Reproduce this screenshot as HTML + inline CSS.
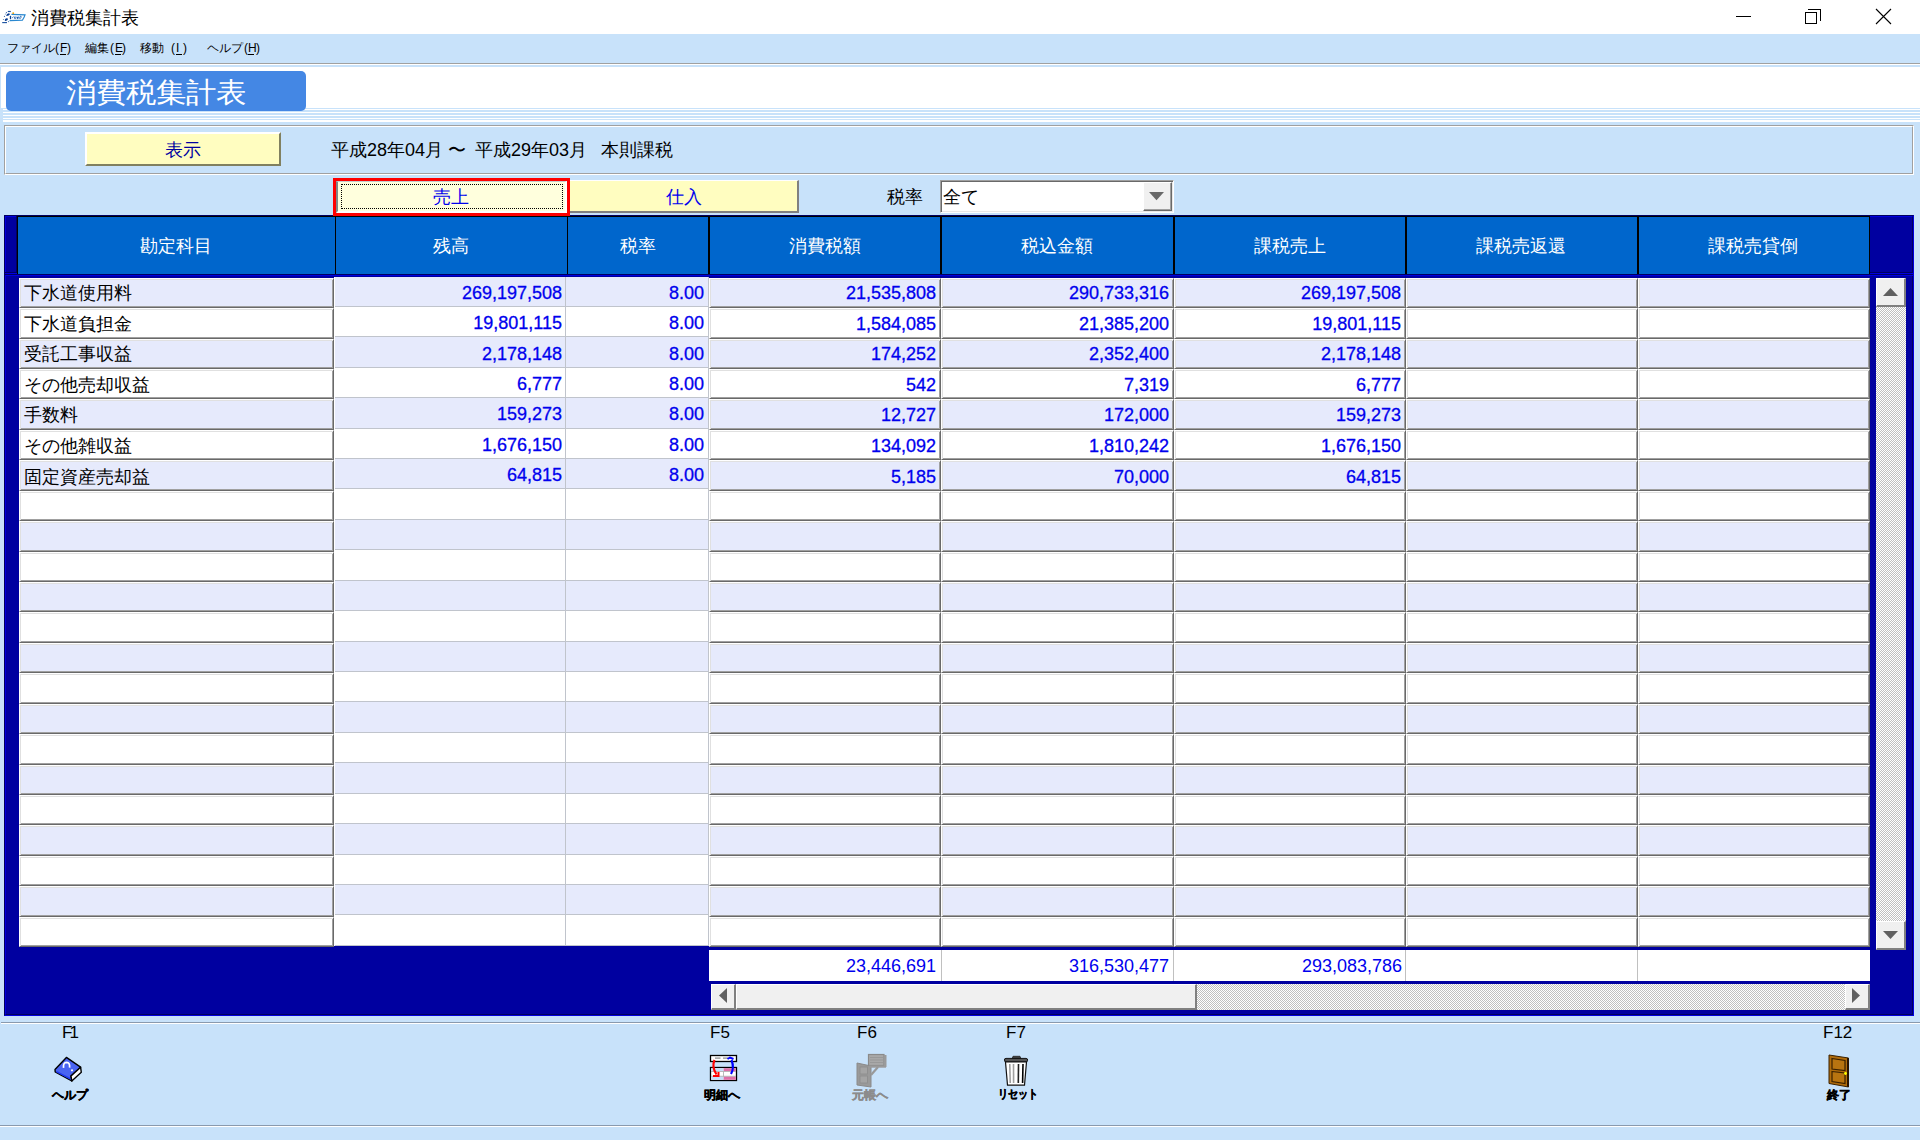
<!DOCTYPE html><html><head><meta charset="utf-8"><style>
*{box-sizing:border-box}
html,body{margin:0;padding:0}
body{width:1920px;height:1140px;position:relative;overflow:hidden;background:#C8E2FA;font-family:"Liberation Sans",sans-serif;color:#000}
.ab{position:absolute}
.t{position:absolute;white-space:nowrap;line-height:1}
.num{position:absolute;white-space:nowrap;line-height:1;font-size:18px;color:#0000EE;text-align:right;-webkit-text-stroke:0.3px #0000EE}
</style></head><body>
<div class="ab" style="left:0;top:0;width:1920px;height:34px;background:#fff"></div>
<div class="t" style="left:31px;top:9px;font-size:18px">消費税集計表</div>
<svg class="ab" style="left:0px;top:0px" width="30" height="30" viewBox="0 0 30 30">
<path d="M7.8 11.5 H10.8" stroke="#1850a0" stroke-width="1.2"/>
<circle cx="6.4" cy="12.6" r="0.6" fill="#3060a8"/>
<circle cx="5.4" cy="14" r="0.5" fill="#5080c0"/>
<path d="M6.2 15.6 Q6.8 13.4 8.8 13.3 Q10.2 13.4 9.8 14.6 Q9 15.9 6.6 15.9 Z" fill="#063a90"/>
<circle cx="4.4" cy="16.4" r="0.55" fill="#3060a8"/>
<path d="M4.8 20.6 Q4.6 18.5 6.5 18.2 Q8.3 18.2 7.9 19.6 Q7.3 20.9 5.2 20.9 Z" fill="#063a90"/>
<circle cx="3.4" cy="19.4" r="0.5" fill="#4070b0"/>
<path d="M2.2 22.6 H7" stroke="#1850a0" stroke-width="1.1"/>
<circle cx="8.4" cy="21.6" r="0.55" fill="#4070b0"/>
<path d="M10.5 15.8 V19.2" stroke="#0a4090" stroke-width="1.3"/>
<path d="M11.4 14.4 L25 14.8 L24.2 17 L22.4 20.2 L9.6 20.6" stroke="#2a88d0" stroke-width="1.2" fill="none"/>
<path d="M12.3 17.8 L13.5 16.8 M14.8 16.6 L14.6 18.4 Q15.5 19 16 17.6 L16 16.6 M17.6 16.8 L17.3 19 M18.8 16.5 L18.8 18.5 M20.2 16.2 Q21.5 16.3 21.2 17.4 Q20.6 18.6 19.2 18" stroke="#1a5cb0" stroke-width="1" fill="none"/>
<circle cx="13.2" cy="13.2" r="0.9" fill="#f0a000"/>
</svg>
<div class="ab" style="left:1736px;top:16px;width:15px;height:1px;background:#000"></div>
<div class="ab" style="left:1805px;top:12px;width:12px;height:12px;border:1px solid #000"></div>
<div class="ab" style="left:1808px;top:9px;width:13px;height:12px;border-top:1px solid #000;border-right:1px solid #000"></div>
<svg class="ab" style="left:1875px;top:8px" width="17" height="17" viewBox="0 0 17 17"><path d="M1 1 L16 16 M16 1 L1 16" stroke="#000" stroke-width="1.1"/></svg>
<div class="t" style="left:7px;top:42px;font-size:12px">ファイル</div>
<div class="t" style="left:55px;top:42px;font-size:12px">(</div>
<div class="t" style="left:60px;top:42px;font-size:12px">F</div>
<div class="t" style="left:67px;top:42px;font-size:12px">)</div>
<div class="t" style="left:85px;top:42px;font-size:12px">編集</div>
<div class="t" style="left:110px;top:42px;font-size:12px">(</div>
<div class="t" style="left:115px;top:42px;font-size:12px">E</div>
<div class="t" style="left:122px;top:42px;font-size:12px">)</div>
<div class="t" style="left:140px;top:42px;font-size:12px">移動</div>
<div class="t" style="left:171px;top:42px;font-size:12px">(</div>
<div class="t" style="left:176px;top:42px;font-size:12px">I</div>
<div class="t" style="left:183px;top:42px;font-size:12px">)</div>
<div class="t" style="left:207px;top:42px;font-size:12px">ヘルプ</div>
<div class="t" style="left:244px;top:42px;font-size:12px">(</div>
<div class="t" style="left:248px;top:42px;font-size:12px">H</div>
<div class="t" style="left:256px;top:42px;font-size:12px">)</div>
<div class="ab" style="left:60px;top:54px;width:6px;height:1px;background:#000"></div>
<div class="ab" style="left:115px;top:54px;width:6px;height:1px;background:#000"></div>
<div class="ab" style="left:176px;top:54px;width:6px;height:1px;background:#000"></div>
<div class="ab" style="left:248px;top:54px;width:6px;height:1px;background:#000"></div>
<div class="ab" style="left:0;top:63px;width:1920px;height:1px;background:#A0A0A0"></div>
<div class="ab" style="left:0;top:64px;width:1920px;height:1px;background:#fff"></div>
<div class="ab" style="left:0;top:65px;width:1920px;height:2px;background:#C8E2FA"></div>
<div class="ab" style="left:0;top:67px;width:1920px;height:41px;background:#fff"></div>
<div class="ab" style="left:3px;top:108px;width:1917px;height:1px;background:#C8E2FA"></div>
<div class="ab" style="left:3px;top:109px;width:1917px;height:1px;background:#fff"></div>
<div class="ab" style="left:3px;top:110px;width:1917px;height:2px;background:#C8E2FA"></div>
<div class="ab" style="left:3px;top:112px;width:1917px;height:1px;background:#fff"></div>
<div class="ab" style="left:3px;top:113px;width:1917px;height:2px;background:#C8E2FA"></div>
<div class="ab" style="left:3px;top:115px;width:1917px;height:1px;background:#fff"></div>
<div class="ab" style="left:3px;top:116px;width:1917px;height:2px;background:#C8E2FA"></div>
<div class="ab" style="left:3px;top:118px;width:1917px;height:1px;background:#fff"></div>
<div class="ab" style="left:3px;top:119px;width:1917px;height:1px;background:#C8E2FA"></div>
<div class="ab" style="left:3px;top:120px;width:1917px;height:2px;background:#fff"></div>
<div class="ab" style="left:3px;top:122px;width:1917px;height:3px;background:#C8E2FA"></div>
<div class="ab" style="left:0;top:67px;width:1px;height:41px;background:#C8E2FA"></div>
<div class="ab" style="left:0;top:108px;width:3px;height:17px;background:#C8E2FA"></div>
<div class="ab" style="left:6px;top:71px;width:300px;height:40px;background:#4487E4;border-radius:5px"></div>
<div class="t" style="left:66px;top:79px;font-size:30px;color:#fff;transform:scaleY(0.92);transform-origin:0 0">消費税集計表</div>
<div class="ab" style="left:4px;top:125px;width:1910px;height:50px;border-top:1px solid #A0A0A0;border-left:1px solid #A0A0A0;border-bottom:1px solid #fff;border-right:1px solid #fff"></div>
<div class="ab" style="left:5px;top:126px;width:1908px;height:48px;border-top:1px solid #fff;border-left:1px solid #fff;border-bottom:1px solid #A0A0A0;border-right:1px solid #A0A0A0"></div>
<div class="ab" style="left:85px;top:132px;width:196px;height:34px;background:#FFFDC0;border-top:2px solid #fff;border-left:2px solid #fff;border-bottom:2px solid #808060;border-right:2px solid #808060"></div>
<div class="t" style="left:165px;top:141px;font-size:18px;color:#0000A0">表示</div>
<div class="t" style="left:331px;top:141px;font-size:18px">平成28年04月</div>
<div class="t" style="left:448px;top:141px;font-size:18px">〜</div>
<div class="t" style="left:475px;top:141px;font-size:18px">平成29年03月</div>
<div class="t" style="left:601px;top:141px;font-size:18px">本則課税</div>
<div class="ab" style="left:333px;top:178px;width:237px;height:38px;border:3px solid #FF0000;z-index:5"></div>
<div class="ab" style="left:336px;top:181px;width:231px;height:32px;background:#FFFFDD;border-top:1px solid #C8CCCC;border-left:2px solid #808888;border-bottom:2px solid #fff;border-right:2px solid #fff;z-index:5"></div>
<div class="ab" style="left:341px;top:184px;width:222px;height:25px;border:1px dotted #000;z-index:6"></div>
<div class="t" style="left:433px;top:188px;font-size:18px;color:#0000EE;z-index:6">売上</div>
<div class="ab" style="left:570px;top:180px;width:229px;height:33px;background:#FFFDC0;border-top:1px solid #fff;border-bottom:2px solid #808080;border-right:2px solid #808080"></div>
<div class="t" style="left:666px;top:188px;font-size:18px;color:#0000EE">仕入</div>
<div class="t" style="left:887px;top:188px;font-size:18px">税率</div>
<div class="ab" style="left:940px;top:180px;width:234px;height:33px;background:#fff;border-top:1px solid #A0A0A0;border-left:1px solid #A0A0A0;border-bottom:1px solid #fff;border-right:1px solid #fff;box-shadow:inset 1px 1px 0 #696969,inset -1px -1px 0 #E8E8E8"></div>
<div class="t" style="left:943px;top:188px;font-size:18px">全て</div>
<div class="ab" style="left:1143px;top:182px;width:29px;height:29px;background:#F0F0F0;border-top:1px solid #fff;border-left:1px solid #fff;border-bottom:1px solid #696969;border-right:1px solid #696969;box-shadow:inset -1px -1px 0 #A0A0A0"></div>
<svg class="ab" style="left:1149px;top:192px" width="16" height="9"><path d="M0 0 H15 L7.5 8.2 Z" fill="#696969"/></svg>
<div class="ab" style="left:4px;top:215px;width:1910px;height:801px;background:#0000A0;border-top:1px solid #000060;border-left:1px solid #000060;border-bottom:1px solid #0000E0;border-right:1px solid #0000E0"></div>
<div class="ab" style="left:5px;top:216px;width:1908px;height:799px;border-top:1px solid #0000E0;border-left:1px solid #0000E0;border-bottom:1px solid #000060;border-right:1px solid #000060"></div>
<div class="ab" style="left:16px;top:216px;width:1px;height:58px;background:#000060"></div>
<div class="ab" style="left:17px;top:216px;width:1853px;height:58px;background:#0066CC;border-top:1px solid #000;border-left:1px solid #000"></div>
<div class="ab" style="left:5px;top:272px;width:12px;height:1px;background:#000060"></div>
<div class="ab" style="left:5px;top:273px;width:12px;height:1px;background:#0000E0"></div>
<div class="ab" style="left:5px;top:274px;width:1908px;height:1px;background:#000060"></div>
<div class="ab" style="left:5px;top:275px;width:1908px;height:1px;background:#0000E0"></div>
<div class="ab" style="left:1870px;top:272px;width:43px;height:1px;background:#000060"></div>
<div class="ab" style="left:1870px;top:273px;width:43px;height:1px;background:#0000E0"></div>
<div class="ab" style="left:335px;top:216px;width:1px;height:58px;background:#000"></div>
<div class="ab" style="left:567px;top:216px;width:1px;height:58px;background:#000"></div>
<div class="ab" style="left:708px;top:216px;width:2px;height:58px;background:#000"></div>
<div class="ab" style="left:940px;top:216px;width:2px;height:58px;background:#000"></div>
<div class="ab" style="left:1173px;top:216px;width:2px;height:58px;background:#000"></div>
<div class="ab" style="left:1405px;top:216px;width:2px;height:58px;background:#000"></div>
<div class="ab" style="left:1637px;top:216px;width:2px;height:58px;background:#000"></div>
<div class="ab" style="left:1869px;top:216px;width:1px;height:58px;background:#000"></div>
<div class="t" style="left:17px;top:237px;width:317px;text-align:center;font-size:18px;color:#fff">勘定科目</div>
<div class="t" style="left:335px;top:237px;width:231px;text-align:center;font-size:18px;color:#fff">残高</div>
<div class="t" style="left:567px;top:237px;width:141px;text-align:center;font-size:18px;color:#fff">税率</div>
<div class="t" style="left:709px;top:237px;width:231px;text-align:center;font-size:18px;color:#fff">消費税額</div>
<div class="t" style="left:941px;top:237px;width:232px;text-align:center;font-size:18px;color:#fff">税込金額</div>
<div class="t" style="left:1174px;top:237px;width:231px;text-align:center;font-size:18px;color:#fff">課税売上</div>
<div class="t" style="left:1406px;top:237px;width:230px;text-align:center;font-size:18px;color:#fff">課税売返還</div>
<div class="t" style="left:1637px;top:237px;width:231px;text-align:center;font-size:18px;color:#fff">課税売貸倒</div>
<div class="ab" style="left:334px;top:277px;width:375px;height:30px;background:#E6EAFC;border-bottom:1px solid #C0C4CC"></div>
<div class="ab" style="left:334px;top:277px;width:1px;height:30px;background:#fff"></div>
<div class="ab" style="left:565px;top:277px;width:1px;height:30px;background:#C0C4CC"></div>
<div class="ab" style="left:708px;top:277px;width:1px;height:30px;background:#C0C4CC"></div>
<div class="ab" style="left:19px;top:278px;width:315px;height:30px;background:#E6EAFC;border-top:1px solid #fff;border-left:1px solid #fff;border-bottom:1px solid #696969;border-right:1px solid #696969;box-shadow:inset 1px 1px 0 #E0E0E0,inset -1px -1px 0 #A0A0A0"></div>
<div class="ab" style="left:709px;top:278px;width:232px;height:30px;background:#E6EAFC;border-top:1px solid #fff;border-left:1px solid #fff;border-bottom:1px solid #696969;border-right:1px solid #696969;box-shadow:inset 1px 1px 0 #E0E0E0,inset -1px -1px 0 #A0A0A0"></div>
<div class="ab" style="left:941px;top:278px;width:233px;height:30px;background:#E6EAFC;border-top:1px solid #fff;border-left:1px solid #fff;border-bottom:1px solid #696969;border-right:1px solid #696969;box-shadow:inset 1px 1px 0 #E0E0E0,inset -1px -1px 0 #A0A0A0"></div>
<div class="ab" style="left:1174px;top:278px;width:232px;height:30px;background:#E6EAFC;border-top:1px solid #fff;border-left:1px solid #fff;border-bottom:1px solid #696969;border-right:1px solid #696969;box-shadow:inset 1px 1px 0 #E0E0E0,inset -1px -1px 0 #A0A0A0"></div>
<div class="ab" style="left:1406px;top:278px;width:232px;height:30px;background:#E6EAFC;border-top:1px solid #fff;border-left:1px solid #fff;border-bottom:1px solid #696969;border-right:1px solid #696969;box-shadow:inset 1px 1px 0 #E0E0E0,inset -1px -1px 0 #A0A0A0"></div>
<div class="ab" style="left:1638px;top:278px;width:232px;height:30px;background:#E6EAFC;border-top:1px solid #fff;border-left:1px solid #fff;border-bottom:1px solid #696969;border-right:1px solid #696969;box-shadow:inset 1px 1px 0 #E0E0E0,inset -1px -1px 0 #A0A0A0"></div>
<div class="t" style="left:24px;top:284px;font-size:18px">下水道使用料</div>
<div class="num" style="left:362px;top:284px;width:200px">269,197,508</div>
<div class="num" style="left:504px;top:284px;width:200px">8.00</div>
<div class="num" style="left:736px;top:284px;width:200px">21,535,808</div>
<div class="num" style="left:969px;top:284px;width:200px">290,733,316</div>
<div class="num" style="left:1201px;top:284px;width:200px">269,197,508</div>
<div class="ab" style="left:334px;top:307px;width:375px;height:30px;background:#fff;border-bottom:1px solid #C0C4CC"></div>
<div class="ab" style="left:334px;top:307px;width:1px;height:30px;background:#fff"></div>
<div class="ab" style="left:565px;top:307px;width:1px;height:30px;background:#C0C4CC"></div>
<div class="ab" style="left:708px;top:307px;width:1px;height:30px;background:#C0C4CC"></div>
<div class="ab" style="left:19px;top:308px;width:315px;height:31px;background:#fff;border-top:1px solid #fff;border-left:1px solid #fff;border-bottom:1px solid #696969;border-right:1px solid #696969;box-shadow:inset 1px 1px 0 #E0E0E0,inset -1px -1px 0 #A0A0A0"></div>
<div class="ab" style="left:709px;top:308px;width:232px;height:31px;background:#fff;border-top:1px solid #fff;border-left:1px solid #fff;border-bottom:1px solid #696969;border-right:1px solid #696969;box-shadow:inset 1px 1px 0 #E0E0E0,inset -1px -1px 0 #A0A0A0"></div>
<div class="ab" style="left:941px;top:308px;width:233px;height:31px;background:#fff;border-top:1px solid #fff;border-left:1px solid #fff;border-bottom:1px solid #696969;border-right:1px solid #696969;box-shadow:inset 1px 1px 0 #E0E0E0,inset -1px -1px 0 #A0A0A0"></div>
<div class="ab" style="left:1174px;top:308px;width:232px;height:31px;background:#fff;border-top:1px solid #fff;border-left:1px solid #fff;border-bottom:1px solid #696969;border-right:1px solid #696969;box-shadow:inset 1px 1px 0 #E0E0E0,inset -1px -1px 0 #A0A0A0"></div>
<div class="ab" style="left:1406px;top:308px;width:232px;height:31px;background:#fff;border-top:1px solid #fff;border-left:1px solid #fff;border-bottom:1px solid #696969;border-right:1px solid #696969;box-shadow:inset 1px 1px 0 #E0E0E0,inset -1px -1px 0 #A0A0A0"></div>
<div class="ab" style="left:1638px;top:308px;width:232px;height:31px;background:#fff;border-top:1px solid #fff;border-left:1px solid #fff;border-bottom:1px solid #696969;border-right:1px solid #696969;box-shadow:inset 1px 1px 0 #E0E0E0,inset -1px -1px 0 #A0A0A0"></div>
<div class="t" style="left:24px;top:315px;font-size:18px">下水道負担金</div>
<div class="num" style="left:362px;top:314px;width:200px">19,801,115</div>
<div class="num" style="left:504px;top:314px;width:200px">8.00</div>
<div class="num" style="left:736px;top:315px;width:200px">1,584,085</div>
<div class="num" style="left:969px;top:315px;width:200px">21,385,200</div>
<div class="num" style="left:1201px;top:315px;width:200px">19,801,115</div>
<div class="ab" style="left:334px;top:337px;width:375px;height:31px;background:#E6EAFC;border-bottom:1px solid #C0C4CC"></div>
<div class="ab" style="left:334px;top:337px;width:1px;height:31px;background:#fff"></div>
<div class="ab" style="left:565px;top:337px;width:1px;height:31px;background:#C0C4CC"></div>
<div class="ab" style="left:708px;top:337px;width:1px;height:31px;background:#C0C4CC"></div>
<div class="ab" style="left:19px;top:339px;width:315px;height:30px;background:#E6EAFC;border-top:1px solid #fff;border-left:1px solid #fff;border-bottom:1px solid #696969;border-right:1px solid #696969;box-shadow:inset 1px 1px 0 #E0E0E0,inset -1px -1px 0 #A0A0A0"></div>
<div class="ab" style="left:709px;top:339px;width:232px;height:30px;background:#E6EAFC;border-top:1px solid #fff;border-left:1px solid #fff;border-bottom:1px solid #696969;border-right:1px solid #696969;box-shadow:inset 1px 1px 0 #E0E0E0,inset -1px -1px 0 #A0A0A0"></div>
<div class="ab" style="left:941px;top:339px;width:233px;height:30px;background:#E6EAFC;border-top:1px solid #fff;border-left:1px solid #fff;border-bottom:1px solid #696969;border-right:1px solid #696969;box-shadow:inset 1px 1px 0 #E0E0E0,inset -1px -1px 0 #A0A0A0"></div>
<div class="ab" style="left:1174px;top:339px;width:232px;height:30px;background:#E6EAFC;border-top:1px solid #fff;border-left:1px solid #fff;border-bottom:1px solid #696969;border-right:1px solid #696969;box-shadow:inset 1px 1px 0 #E0E0E0,inset -1px -1px 0 #A0A0A0"></div>
<div class="ab" style="left:1406px;top:339px;width:232px;height:30px;background:#E6EAFC;border-top:1px solid #fff;border-left:1px solid #fff;border-bottom:1px solid #696969;border-right:1px solid #696969;box-shadow:inset 1px 1px 0 #E0E0E0,inset -1px -1px 0 #A0A0A0"></div>
<div class="ab" style="left:1638px;top:339px;width:232px;height:30px;background:#E6EAFC;border-top:1px solid #fff;border-left:1px solid #fff;border-bottom:1px solid #696969;border-right:1px solid #696969;box-shadow:inset 1px 1px 0 #E0E0E0,inset -1px -1px 0 #A0A0A0"></div>
<div class="t" style="left:24px;top:345px;font-size:18px">受託工事収益</div>
<div class="num" style="left:362px;top:345px;width:200px">2,178,148</div>
<div class="num" style="left:504px;top:345px;width:200px">8.00</div>
<div class="num" style="left:736px;top:345px;width:200px">174,252</div>
<div class="num" style="left:969px;top:345px;width:200px">2,352,400</div>
<div class="num" style="left:1201px;top:345px;width:200px">2,178,148</div>
<div class="ab" style="left:334px;top:368px;width:375px;height:30px;background:#fff;border-bottom:1px solid #C0C4CC"></div>
<div class="ab" style="left:334px;top:368px;width:1px;height:30px;background:#fff"></div>
<div class="ab" style="left:565px;top:368px;width:1px;height:30px;background:#C0C4CC"></div>
<div class="ab" style="left:708px;top:368px;width:1px;height:30px;background:#C0C4CC"></div>
<div class="ab" style="left:19px;top:369px;width:315px;height:30px;background:#fff;border-top:1px solid #fff;border-left:1px solid #fff;border-bottom:1px solid #696969;border-right:1px solid #696969;box-shadow:inset 1px 1px 0 #E0E0E0,inset -1px -1px 0 #A0A0A0"></div>
<div class="ab" style="left:709px;top:369px;width:232px;height:30px;background:#fff;border-top:1px solid #fff;border-left:1px solid #fff;border-bottom:1px solid #696969;border-right:1px solid #696969;box-shadow:inset 1px 1px 0 #E0E0E0,inset -1px -1px 0 #A0A0A0"></div>
<div class="ab" style="left:941px;top:369px;width:233px;height:30px;background:#fff;border-top:1px solid #fff;border-left:1px solid #fff;border-bottom:1px solid #696969;border-right:1px solid #696969;box-shadow:inset 1px 1px 0 #E0E0E0,inset -1px -1px 0 #A0A0A0"></div>
<div class="ab" style="left:1174px;top:369px;width:232px;height:30px;background:#fff;border-top:1px solid #fff;border-left:1px solid #fff;border-bottom:1px solid #696969;border-right:1px solid #696969;box-shadow:inset 1px 1px 0 #E0E0E0,inset -1px -1px 0 #A0A0A0"></div>
<div class="ab" style="left:1406px;top:369px;width:232px;height:30px;background:#fff;border-top:1px solid #fff;border-left:1px solid #fff;border-bottom:1px solid #696969;border-right:1px solid #696969;box-shadow:inset 1px 1px 0 #E0E0E0,inset -1px -1px 0 #A0A0A0"></div>
<div class="ab" style="left:1638px;top:369px;width:232px;height:30px;background:#fff;border-top:1px solid #fff;border-left:1px solid #fff;border-bottom:1px solid #696969;border-right:1px solid #696969;box-shadow:inset 1px 1px 0 #E0E0E0,inset -1px -1px 0 #A0A0A0"></div>
<div class="t" style="left:24px;top:376px;font-size:18px">その他売却収益</div>
<div class="num" style="left:362px;top:375px;width:200px">6,777</div>
<div class="num" style="left:504px;top:375px;width:200px">8.00</div>
<div class="num" style="left:736px;top:376px;width:200px">542</div>
<div class="num" style="left:969px;top:376px;width:200px">7,319</div>
<div class="num" style="left:1201px;top:376px;width:200px">6,777</div>
<div class="ab" style="left:334px;top:398px;width:375px;height:31px;background:#E6EAFC;border-bottom:1px solid #C0C4CC"></div>
<div class="ab" style="left:334px;top:398px;width:1px;height:31px;background:#fff"></div>
<div class="ab" style="left:565px;top:398px;width:1px;height:31px;background:#C0C4CC"></div>
<div class="ab" style="left:708px;top:398px;width:1px;height:31px;background:#C0C4CC"></div>
<div class="ab" style="left:19px;top:399px;width:315px;height:31px;background:#E6EAFC;border-top:1px solid #fff;border-left:1px solid #fff;border-bottom:1px solid #696969;border-right:1px solid #696969;box-shadow:inset 1px 1px 0 #E0E0E0,inset -1px -1px 0 #A0A0A0"></div>
<div class="ab" style="left:709px;top:399px;width:232px;height:31px;background:#E6EAFC;border-top:1px solid #fff;border-left:1px solid #fff;border-bottom:1px solid #696969;border-right:1px solid #696969;box-shadow:inset 1px 1px 0 #E0E0E0,inset -1px -1px 0 #A0A0A0"></div>
<div class="ab" style="left:941px;top:399px;width:233px;height:31px;background:#E6EAFC;border-top:1px solid #fff;border-left:1px solid #fff;border-bottom:1px solid #696969;border-right:1px solid #696969;box-shadow:inset 1px 1px 0 #E0E0E0,inset -1px -1px 0 #A0A0A0"></div>
<div class="ab" style="left:1174px;top:399px;width:232px;height:31px;background:#E6EAFC;border-top:1px solid #fff;border-left:1px solid #fff;border-bottom:1px solid #696969;border-right:1px solid #696969;box-shadow:inset 1px 1px 0 #E0E0E0,inset -1px -1px 0 #A0A0A0"></div>
<div class="ab" style="left:1406px;top:399px;width:232px;height:31px;background:#E6EAFC;border-top:1px solid #fff;border-left:1px solid #fff;border-bottom:1px solid #696969;border-right:1px solid #696969;box-shadow:inset 1px 1px 0 #E0E0E0,inset -1px -1px 0 #A0A0A0"></div>
<div class="ab" style="left:1638px;top:399px;width:232px;height:31px;background:#E6EAFC;border-top:1px solid #fff;border-left:1px solid #fff;border-bottom:1px solid #696969;border-right:1px solid #696969;box-shadow:inset 1px 1px 0 #E0E0E0,inset -1px -1px 0 #A0A0A0"></div>
<div class="t" style="left:24px;top:406px;font-size:18px">手数料</div>
<div class="num" style="left:362px;top:405px;width:200px">159,273</div>
<div class="num" style="left:504px;top:405px;width:200px">8.00</div>
<div class="num" style="left:736px;top:406px;width:200px">12,727</div>
<div class="num" style="left:969px;top:406px;width:200px">172,000</div>
<div class="num" style="left:1201px;top:406px;width:200px">159,273</div>
<div class="ab" style="left:334px;top:429px;width:375px;height:30px;background:#fff;border-bottom:1px solid #C0C4CC"></div>
<div class="ab" style="left:334px;top:429px;width:1px;height:30px;background:#fff"></div>
<div class="ab" style="left:565px;top:429px;width:1px;height:30px;background:#C0C4CC"></div>
<div class="ab" style="left:708px;top:429px;width:1px;height:30px;background:#C0C4CC"></div>
<div class="ab" style="left:19px;top:430px;width:315px;height:30px;background:#fff;border-top:1px solid #fff;border-left:1px solid #fff;border-bottom:1px solid #696969;border-right:1px solid #696969;box-shadow:inset 1px 1px 0 #E0E0E0,inset -1px -1px 0 #A0A0A0"></div>
<div class="ab" style="left:709px;top:430px;width:232px;height:30px;background:#fff;border-top:1px solid #fff;border-left:1px solid #fff;border-bottom:1px solid #696969;border-right:1px solid #696969;box-shadow:inset 1px 1px 0 #E0E0E0,inset -1px -1px 0 #A0A0A0"></div>
<div class="ab" style="left:941px;top:430px;width:233px;height:30px;background:#fff;border-top:1px solid #fff;border-left:1px solid #fff;border-bottom:1px solid #696969;border-right:1px solid #696969;box-shadow:inset 1px 1px 0 #E0E0E0,inset -1px -1px 0 #A0A0A0"></div>
<div class="ab" style="left:1174px;top:430px;width:232px;height:30px;background:#fff;border-top:1px solid #fff;border-left:1px solid #fff;border-bottom:1px solid #696969;border-right:1px solid #696969;box-shadow:inset 1px 1px 0 #E0E0E0,inset -1px -1px 0 #A0A0A0"></div>
<div class="ab" style="left:1406px;top:430px;width:232px;height:30px;background:#fff;border-top:1px solid #fff;border-left:1px solid #fff;border-bottom:1px solid #696969;border-right:1px solid #696969;box-shadow:inset 1px 1px 0 #E0E0E0,inset -1px -1px 0 #A0A0A0"></div>
<div class="ab" style="left:1638px;top:430px;width:232px;height:30px;background:#fff;border-top:1px solid #fff;border-left:1px solid #fff;border-bottom:1px solid #696969;border-right:1px solid #696969;box-shadow:inset 1px 1px 0 #E0E0E0,inset -1px -1px 0 #A0A0A0"></div>
<div class="t" style="left:24px;top:437px;font-size:18px">その他雑収益</div>
<div class="num" style="left:362px;top:436px;width:200px">1,676,150</div>
<div class="num" style="left:504px;top:436px;width:200px">8.00</div>
<div class="num" style="left:736px;top:437px;width:200px">134,092</div>
<div class="num" style="left:969px;top:437px;width:200px">1,810,242</div>
<div class="num" style="left:1201px;top:437px;width:200px">1,676,150</div>
<div class="ab" style="left:334px;top:459px;width:375px;height:30px;background:#E6EAFC;border-bottom:1px solid #C0C4CC"></div>
<div class="ab" style="left:334px;top:459px;width:1px;height:30px;background:#fff"></div>
<div class="ab" style="left:565px;top:459px;width:1px;height:30px;background:#C0C4CC"></div>
<div class="ab" style="left:708px;top:459px;width:1px;height:30px;background:#C0C4CC"></div>
<div class="ab" style="left:19px;top:460px;width:315px;height:31px;background:#E6EAFC;border-top:1px solid #fff;border-left:1px solid #fff;border-bottom:1px solid #696969;border-right:1px solid #696969;box-shadow:inset 1px 1px 0 #E0E0E0,inset -1px -1px 0 #A0A0A0"></div>
<div class="ab" style="left:709px;top:460px;width:232px;height:31px;background:#E6EAFC;border-top:1px solid #fff;border-left:1px solid #fff;border-bottom:1px solid #696969;border-right:1px solid #696969;box-shadow:inset 1px 1px 0 #E0E0E0,inset -1px -1px 0 #A0A0A0"></div>
<div class="ab" style="left:941px;top:460px;width:233px;height:31px;background:#E6EAFC;border-top:1px solid #fff;border-left:1px solid #fff;border-bottom:1px solid #696969;border-right:1px solid #696969;box-shadow:inset 1px 1px 0 #E0E0E0,inset -1px -1px 0 #A0A0A0"></div>
<div class="ab" style="left:1174px;top:460px;width:232px;height:31px;background:#E6EAFC;border-top:1px solid #fff;border-left:1px solid #fff;border-bottom:1px solid #696969;border-right:1px solid #696969;box-shadow:inset 1px 1px 0 #E0E0E0,inset -1px -1px 0 #A0A0A0"></div>
<div class="ab" style="left:1406px;top:460px;width:232px;height:31px;background:#E6EAFC;border-top:1px solid #fff;border-left:1px solid #fff;border-bottom:1px solid #696969;border-right:1px solid #696969;box-shadow:inset 1px 1px 0 #E0E0E0,inset -1px -1px 0 #A0A0A0"></div>
<div class="ab" style="left:1638px;top:460px;width:232px;height:31px;background:#E6EAFC;border-top:1px solid #fff;border-left:1px solid #fff;border-bottom:1px solid #696969;border-right:1px solid #696969;box-shadow:inset 1px 1px 0 #E0E0E0,inset -1px -1px 0 #A0A0A0"></div>
<div class="t" style="left:24px;top:468px;font-size:18px">固定資産売却益</div>
<div class="num" style="left:362px;top:466px;width:200px">64,815</div>
<div class="num" style="left:504px;top:466px;width:200px">8.00</div>
<div class="num" style="left:736px;top:468px;width:200px">5,185</div>
<div class="num" style="left:969px;top:468px;width:200px">70,000</div>
<div class="num" style="left:1201px;top:468px;width:200px">64,815</div>
<div class="ab" style="left:334px;top:489px;width:375px;height:31px;background:#fff;border-bottom:1px solid #C0C4CC"></div>
<div class="ab" style="left:334px;top:489px;width:1px;height:31px;background:#fff"></div>
<div class="ab" style="left:565px;top:489px;width:1px;height:31px;background:#C0C4CC"></div>
<div class="ab" style="left:708px;top:489px;width:1px;height:31px;background:#C0C4CC"></div>
<div class="ab" style="left:19px;top:491px;width:315px;height:30px;background:#fff;border-top:1px solid #fff;border-left:1px solid #fff;border-bottom:1px solid #696969;border-right:1px solid #696969;box-shadow:inset 1px 1px 0 #E0E0E0,inset -1px -1px 0 #A0A0A0"></div>
<div class="ab" style="left:709px;top:491px;width:232px;height:30px;background:#fff;border-top:1px solid #fff;border-left:1px solid #fff;border-bottom:1px solid #696969;border-right:1px solid #696969;box-shadow:inset 1px 1px 0 #E0E0E0,inset -1px -1px 0 #A0A0A0"></div>
<div class="ab" style="left:941px;top:491px;width:233px;height:30px;background:#fff;border-top:1px solid #fff;border-left:1px solid #fff;border-bottom:1px solid #696969;border-right:1px solid #696969;box-shadow:inset 1px 1px 0 #E0E0E0,inset -1px -1px 0 #A0A0A0"></div>
<div class="ab" style="left:1174px;top:491px;width:232px;height:30px;background:#fff;border-top:1px solid #fff;border-left:1px solid #fff;border-bottom:1px solid #696969;border-right:1px solid #696969;box-shadow:inset 1px 1px 0 #E0E0E0,inset -1px -1px 0 #A0A0A0"></div>
<div class="ab" style="left:1406px;top:491px;width:232px;height:30px;background:#fff;border-top:1px solid #fff;border-left:1px solid #fff;border-bottom:1px solid #696969;border-right:1px solid #696969;box-shadow:inset 1px 1px 0 #E0E0E0,inset -1px -1px 0 #A0A0A0"></div>
<div class="ab" style="left:1638px;top:491px;width:232px;height:30px;background:#fff;border-top:1px solid #fff;border-left:1px solid #fff;border-bottom:1px solid #696969;border-right:1px solid #696969;box-shadow:inset 1px 1px 0 #E0E0E0,inset -1px -1px 0 #A0A0A0"></div>
<div class="ab" style="left:334px;top:520px;width:375px;height:30px;background:#E6EAFC;border-bottom:1px solid #C0C4CC"></div>
<div class="ab" style="left:334px;top:520px;width:1px;height:30px;background:#fff"></div>
<div class="ab" style="left:565px;top:520px;width:1px;height:30px;background:#C0C4CC"></div>
<div class="ab" style="left:708px;top:520px;width:1px;height:30px;background:#C0C4CC"></div>
<div class="ab" style="left:19px;top:521px;width:315px;height:31px;background:#E6EAFC;border-top:1px solid #fff;border-left:1px solid #fff;border-bottom:1px solid #696969;border-right:1px solid #696969;box-shadow:inset 1px 1px 0 #E0E0E0,inset -1px -1px 0 #A0A0A0"></div>
<div class="ab" style="left:709px;top:521px;width:232px;height:31px;background:#E6EAFC;border-top:1px solid #fff;border-left:1px solid #fff;border-bottom:1px solid #696969;border-right:1px solid #696969;box-shadow:inset 1px 1px 0 #E0E0E0,inset -1px -1px 0 #A0A0A0"></div>
<div class="ab" style="left:941px;top:521px;width:233px;height:31px;background:#E6EAFC;border-top:1px solid #fff;border-left:1px solid #fff;border-bottom:1px solid #696969;border-right:1px solid #696969;box-shadow:inset 1px 1px 0 #E0E0E0,inset -1px -1px 0 #A0A0A0"></div>
<div class="ab" style="left:1174px;top:521px;width:232px;height:31px;background:#E6EAFC;border-top:1px solid #fff;border-left:1px solid #fff;border-bottom:1px solid #696969;border-right:1px solid #696969;box-shadow:inset 1px 1px 0 #E0E0E0,inset -1px -1px 0 #A0A0A0"></div>
<div class="ab" style="left:1406px;top:521px;width:232px;height:31px;background:#E6EAFC;border-top:1px solid #fff;border-left:1px solid #fff;border-bottom:1px solid #696969;border-right:1px solid #696969;box-shadow:inset 1px 1px 0 #E0E0E0,inset -1px -1px 0 #A0A0A0"></div>
<div class="ab" style="left:1638px;top:521px;width:232px;height:31px;background:#E6EAFC;border-top:1px solid #fff;border-left:1px solid #fff;border-bottom:1px solid #696969;border-right:1px solid #696969;box-shadow:inset 1px 1px 0 #E0E0E0,inset -1px -1px 0 #A0A0A0"></div>
<div class="ab" style="left:334px;top:550px;width:375px;height:31px;background:#fff;border-bottom:1px solid #C0C4CC"></div>
<div class="ab" style="left:334px;top:550px;width:1px;height:31px;background:#fff"></div>
<div class="ab" style="left:565px;top:550px;width:1px;height:31px;background:#C0C4CC"></div>
<div class="ab" style="left:708px;top:550px;width:1px;height:31px;background:#C0C4CC"></div>
<div class="ab" style="left:19px;top:552px;width:315px;height:30px;background:#fff;border-top:1px solid #fff;border-left:1px solid #fff;border-bottom:1px solid #696969;border-right:1px solid #696969;box-shadow:inset 1px 1px 0 #E0E0E0,inset -1px -1px 0 #A0A0A0"></div>
<div class="ab" style="left:709px;top:552px;width:232px;height:30px;background:#fff;border-top:1px solid #fff;border-left:1px solid #fff;border-bottom:1px solid #696969;border-right:1px solid #696969;box-shadow:inset 1px 1px 0 #E0E0E0,inset -1px -1px 0 #A0A0A0"></div>
<div class="ab" style="left:941px;top:552px;width:233px;height:30px;background:#fff;border-top:1px solid #fff;border-left:1px solid #fff;border-bottom:1px solid #696969;border-right:1px solid #696969;box-shadow:inset 1px 1px 0 #E0E0E0,inset -1px -1px 0 #A0A0A0"></div>
<div class="ab" style="left:1174px;top:552px;width:232px;height:30px;background:#fff;border-top:1px solid #fff;border-left:1px solid #fff;border-bottom:1px solid #696969;border-right:1px solid #696969;box-shadow:inset 1px 1px 0 #E0E0E0,inset -1px -1px 0 #A0A0A0"></div>
<div class="ab" style="left:1406px;top:552px;width:232px;height:30px;background:#fff;border-top:1px solid #fff;border-left:1px solid #fff;border-bottom:1px solid #696969;border-right:1px solid #696969;box-shadow:inset 1px 1px 0 #E0E0E0,inset -1px -1px 0 #A0A0A0"></div>
<div class="ab" style="left:1638px;top:552px;width:232px;height:30px;background:#fff;border-top:1px solid #fff;border-left:1px solid #fff;border-bottom:1px solid #696969;border-right:1px solid #696969;box-shadow:inset 1px 1px 0 #E0E0E0,inset -1px -1px 0 #A0A0A0"></div>
<div class="ab" style="left:334px;top:581px;width:375px;height:30px;background:#E6EAFC;border-bottom:1px solid #C0C4CC"></div>
<div class="ab" style="left:334px;top:581px;width:1px;height:30px;background:#fff"></div>
<div class="ab" style="left:565px;top:581px;width:1px;height:30px;background:#C0C4CC"></div>
<div class="ab" style="left:708px;top:581px;width:1px;height:30px;background:#C0C4CC"></div>
<div class="ab" style="left:19px;top:582px;width:315px;height:30px;background:#E6EAFC;border-top:1px solid #fff;border-left:1px solid #fff;border-bottom:1px solid #696969;border-right:1px solid #696969;box-shadow:inset 1px 1px 0 #E0E0E0,inset -1px -1px 0 #A0A0A0"></div>
<div class="ab" style="left:709px;top:582px;width:232px;height:30px;background:#E6EAFC;border-top:1px solid #fff;border-left:1px solid #fff;border-bottom:1px solid #696969;border-right:1px solid #696969;box-shadow:inset 1px 1px 0 #E0E0E0,inset -1px -1px 0 #A0A0A0"></div>
<div class="ab" style="left:941px;top:582px;width:233px;height:30px;background:#E6EAFC;border-top:1px solid #fff;border-left:1px solid #fff;border-bottom:1px solid #696969;border-right:1px solid #696969;box-shadow:inset 1px 1px 0 #E0E0E0,inset -1px -1px 0 #A0A0A0"></div>
<div class="ab" style="left:1174px;top:582px;width:232px;height:30px;background:#E6EAFC;border-top:1px solid #fff;border-left:1px solid #fff;border-bottom:1px solid #696969;border-right:1px solid #696969;box-shadow:inset 1px 1px 0 #E0E0E0,inset -1px -1px 0 #A0A0A0"></div>
<div class="ab" style="left:1406px;top:582px;width:232px;height:30px;background:#E6EAFC;border-top:1px solid #fff;border-left:1px solid #fff;border-bottom:1px solid #696969;border-right:1px solid #696969;box-shadow:inset 1px 1px 0 #E0E0E0,inset -1px -1px 0 #A0A0A0"></div>
<div class="ab" style="left:1638px;top:582px;width:232px;height:30px;background:#E6EAFC;border-top:1px solid #fff;border-left:1px solid #fff;border-bottom:1px solid #696969;border-right:1px solid #696969;box-shadow:inset 1px 1px 0 #E0E0E0,inset -1px -1px 0 #A0A0A0"></div>
<div class="ab" style="left:334px;top:611px;width:375px;height:31px;background:#fff;border-bottom:1px solid #C0C4CC"></div>
<div class="ab" style="left:334px;top:611px;width:1px;height:31px;background:#fff"></div>
<div class="ab" style="left:565px;top:611px;width:1px;height:31px;background:#C0C4CC"></div>
<div class="ab" style="left:708px;top:611px;width:1px;height:31px;background:#C0C4CC"></div>
<div class="ab" style="left:19px;top:612px;width:315px;height:31px;background:#fff;border-top:1px solid #fff;border-left:1px solid #fff;border-bottom:1px solid #696969;border-right:1px solid #696969;box-shadow:inset 1px 1px 0 #E0E0E0,inset -1px -1px 0 #A0A0A0"></div>
<div class="ab" style="left:709px;top:612px;width:232px;height:31px;background:#fff;border-top:1px solid #fff;border-left:1px solid #fff;border-bottom:1px solid #696969;border-right:1px solid #696969;box-shadow:inset 1px 1px 0 #E0E0E0,inset -1px -1px 0 #A0A0A0"></div>
<div class="ab" style="left:941px;top:612px;width:233px;height:31px;background:#fff;border-top:1px solid #fff;border-left:1px solid #fff;border-bottom:1px solid #696969;border-right:1px solid #696969;box-shadow:inset 1px 1px 0 #E0E0E0,inset -1px -1px 0 #A0A0A0"></div>
<div class="ab" style="left:1174px;top:612px;width:232px;height:31px;background:#fff;border-top:1px solid #fff;border-left:1px solid #fff;border-bottom:1px solid #696969;border-right:1px solid #696969;box-shadow:inset 1px 1px 0 #E0E0E0,inset -1px -1px 0 #A0A0A0"></div>
<div class="ab" style="left:1406px;top:612px;width:232px;height:31px;background:#fff;border-top:1px solid #fff;border-left:1px solid #fff;border-bottom:1px solid #696969;border-right:1px solid #696969;box-shadow:inset 1px 1px 0 #E0E0E0,inset -1px -1px 0 #A0A0A0"></div>
<div class="ab" style="left:1638px;top:612px;width:232px;height:31px;background:#fff;border-top:1px solid #fff;border-left:1px solid #fff;border-bottom:1px solid #696969;border-right:1px solid #696969;box-shadow:inset 1px 1px 0 #E0E0E0,inset -1px -1px 0 #A0A0A0"></div>
<div class="ab" style="left:334px;top:642px;width:375px;height:30px;background:#E6EAFC;border-bottom:1px solid #C0C4CC"></div>
<div class="ab" style="left:334px;top:642px;width:1px;height:30px;background:#fff"></div>
<div class="ab" style="left:565px;top:642px;width:1px;height:30px;background:#C0C4CC"></div>
<div class="ab" style="left:708px;top:642px;width:1px;height:30px;background:#C0C4CC"></div>
<div class="ab" style="left:19px;top:643px;width:315px;height:30px;background:#E6EAFC;border-top:1px solid #fff;border-left:1px solid #fff;border-bottom:1px solid #696969;border-right:1px solid #696969;box-shadow:inset 1px 1px 0 #E0E0E0,inset -1px -1px 0 #A0A0A0"></div>
<div class="ab" style="left:709px;top:643px;width:232px;height:30px;background:#E6EAFC;border-top:1px solid #fff;border-left:1px solid #fff;border-bottom:1px solid #696969;border-right:1px solid #696969;box-shadow:inset 1px 1px 0 #E0E0E0,inset -1px -1px 0 #A0A0A0"></div>
<div class="ab" style="left:941px;top:643px;width:233px;height:30px;background:#E6EAFC;border-top:1px solid #fff;border-left:1px solid #fff;border-bottom:1px solid #696969;border-right:1px solid #696969;box-shadow:inset 1px 1px 0 #E0E0E0,inset -1px -1px 0 #A0A0A0"></div>
<div class="ab" style="left:1174px;top:643px;width:232px;height:30px;background:#E6EAFC;border-top:1px solid #fff;border-left:1px solid #fff;border-bottom:1px solid #696969;border-right:1px solid #696969;box-shadow:inset 1px 1px 0 #E0E0E0,inset -1px -1px 0 #A0A0A0"></div>
<div class="ab" style="left:1406px;top:643px;width:232px;height:30px;background:#E6EAFC;border-top:1px solid #fff;border-left:1px solid #fff;border-bottom:1px solid #696969;border-right:1px solid #696969;box-shadow:inset 1px 1px 0 #E0E0E0,inset -1px -1px 0 #A0A0A0"></div>
<div class="ab" style="left:1638px;top:643px;width:232px;height:30px;background:#E6EAFC;border-top:1px solid #fff;border-left:1px solid #fff;border-bottom:1px solid #696969;border-right:1px solid #696969;box-shadow:inset 1px 1px 0 #E0E0E0,inset -1px -1px 0 #A0A0A0"></div>
<div class="ab" style="left:334px;top:672px;width:375px;height:30px;background:#fff;border-bottom:1px solid #C0C4CC"></div>
<div class="ab" style="left:334px;top:672px;width:1px;height:30px;background:#fff"></div>
<div class="ab" style="left:565px;top:672px;width:1px;height:30px;background:#C0C4CC"></div>
<div class="ab" style="left:708px;top:672px;width:1px;height:30px;background:#C0C4CC"></div>
<div class="ab" style="left:19px;top:673px;width:315px;height:31px;background:#fff;border-top:1px solid #fff;border-left:1px solid #fff;border-bottom:1px solid #696969;border-right:1px solid #696969;box-shadow:inset 1px 1px 0 #E0E0E0,inset -1px -1px 0 #A0A0A0"></div>
<div class="ab" style="left:709px;top:673px;width:232px;height:31px;background:#fff;border-top:1px solid #fff;border-left:1px solid #fff;border-bottom:1px solid #696969;border-right:1px solid #696969;box-shadow:inset 1px 1px 0 #E0E0E0,inset -1px -1px 0 #A0A0A0"></div>
<div class="ab" style="left:941px;top:673px;width:233px;height:31px;background:#fff;border-top:1px solid #fff;border-left:1px solid #fff;border-bottom:1px solid #696969;border-right:1px solid #696969;box-shadow:inset 1px 1px 0 #E0E0E0,inset -1px -1px 0 #A0A0A0"></div>
<div class="ab" style="left:1174px;top:673px;width:232px;height:31px;background:#fff;border-top:1px solid #fff;border-left:1px solid #fff;border-bottom:1px solid #696969;border-right:1px solid #696969;box-shadow:inset 1px 1px 0 #E0E0E0,inset -1px -1px 0 #A0A0A0"></div>
<div class="ab" style="left:1406px;top:673px;width:232px;height:31px;background:#fff;border-top:1px solid #fff;border-left:1px solid #fff;border-bottom:1px solid #696969;border-right:1px solid #696969;box-shadow:inset 1px 1px 0 #E0E0E0,inset -1px -1px 0 #A0A0A0"></div>
<div class="ab" style="left:1638px;top:673px;width:232px;height:31px;background:#fff;border-top:1px solid #fff;border-left:1px solid #fff;border-bottom:1px solid #696969;border-right:1px solid #696969;box-shadow:inset 1px 1px 0 #E0E0E0,inset -1px -1px 0 #A0A0A0"></div>
<div class="ab" style="left:334px;top:702px;width:375px;height:31px;background:#E6EAFC;border-bottom:1px solid #C0C4CC"></div>
<div class="ab" style="left:334px;top:702px;width:1px;height:31px;background:#fff"></div>
<div class="ab" style="left:565px;top:702px;width:1px;height:31px;background:#C0C4CC"></div>
<div class="ab" style="left:708px;top:702px;width:1px;height:31px;background:#C0C4CC"></div>
<div class="ab" style="left:19px;top:704px;width:315px;height:30px;background:#E6EAFC;border-top:1px solid #fff;border-left:1px solid #fff;border-bottom:1px solid #696969;border-right:1px solid #696969;box-shadow:inset 1px 1px 0 #E0E0E0,inset -1px -1px 0 #A0A0A0"></div>
<div class="ab" style="left:709px;top:704px;width:232px;height:30px;background:#E6EAFC;border-top:1px solid #fff;border-left:1px solid #fff;border-bottom:1px solid #696969;border-right:1px solid #696969;box-shadow:inset 1px 1px 0 #E0E0E0,inset -1px -1px 0 #A0A0A0"></div>
<div class="ab" style="left:941px;top:704px;width:233px;height:30px;background:#E6EAFC;border-top:1px solid #fff;border-left:1px solid #fff;border-bottom:1px solid #696969;border-right:1px solid #696969;box-shadow:inset 1px 1px 0 #E0E0E0,inset -1px -1px 0 #A0A0A0"></div>
<div class="ab" style="left:1174px;top:704px;width:232px;height:30px;background:#E6EAFC;border-top:1px solid #fff;border-left:1px solid #fff;border-bottom:1px solid #696969;border-right:1px solid #696969;box-shadow:inset 1px 1px 0 #E0E0E0,inset -1px -1px 0 #A0A0A0"></div>
<div class="ab" style="left:1406px;top:704px;width:232px;height:30px;background:#E6EAFC;border-top:1px solid #fff;border-left:1px solid #fff;border-bottom:1px solid #696969;border-right:1px solid #696969;box-shadow:inset 1px 1px 0 #E0E0E0,inset -1px -1px 0 #A0A0A0"></div>
<div class="ab" style="left:1638px;top:704px;width:232px;height:30px;background:#E6EAFC;border-top:1px solid #fff;border-left:1px solid #fff;border-bottom:1px solid #696969;border-right:1px solid #696969;box-shadow:inset 1px 1px 0 #E0E0E0,inset -1px -1px 0 #A0A0A0"></div>
<div class="ab" style="left:334px;top:733px;width:375px;height:30px;background:#fff;border-bottom:1px solid #C0C4CC"></div>
<div class="ab" style="left:334px;top:733px;width:1px;height:30px;background:#fff"></div>
<div class="ab" style="left:565px;top:733px;width:1px;height:30px;background:#C0C4CC"></div>
<div class="ab" style="left:708px;top:733px;width:1px;height:30px;background:#C0C4CC"></div>
<div class="ab" style="left:19px;top:734px;width:315px;height:31px;background:#fff;border-top:1px solid #fff;border-left:1px solid #fff;border-bottom:1px solid #696969;border-right:1px solid #696969;box-shadow:inset 1px 1px 0 #E0E0E0,inset -1px -1px 0 #A0A0A0"></div>
<div class="ab" style="left:709px;top:734px;width:232px;height:31px;background:#fff;border-top:1px solid #fff;border-left:1px solid #fff;border-bottom:1px solid #696969;border-right:1px solid #696969;box-shadow:inset 1px 1px 0 #E0E0E0,inset -1px -1px 0 #A0A0A0"></div>
<div class="ab" style="left:941px;top:734px;width:233px;height:31px;background:#fff;border-top:1px solid #fff;border-left:1px solid #fff;border-bottom:1px solid #696969;border-right:1px solid #696969;box-shadow:inset 1px 1px 0 #E0E0E0,inset -1px -1px 0 #A0A0A0"></div>
<div class="ab" style="left:1174px;top:734px;width:232px;height:31px;background:#fff;border-top:1px solid #fff;border-left:1px solid #fff;border-bottom:1px solid #696969;border-right:1px solid #696969;box-shadow:inset 1px 1px 0 #E0E0E0,inset -1px -1px 0 #A0A0A0"></div>
<div class="ab" style="left:1406px;top:734px;width:232px;height:31px;background:#fff;border-top:1px solid #fff;border-left:1px solid #fff;border-bottom:1px solid #696969;border-right:1px solid #696969;box-shadow:inset 1px 1px 0 #E0E0E0,inset -1px -1px 0 #A0A0A0"></div>
<div class="ab" style="left:1638px;top:734px;width:232px;height:31px;background:#fff;border-top:1px solid #fff;border-left:1px solid #fff;border-bottom:1px solid #696969;border-right:1px solid #696969;box-shadow:inset 1px 1px 0 #E0E0E0,inset -1px -1px 0 #A0A0A0"></div>
<div class="ab" style="left:334px;top:763px;width:375px;height:31px;background:#E6EAFC;border-bottom:1px solid #C0C4CC"></div>
<div class="ab" style="left:334px;top:763px;width:1px;height:31px;background:#fff"></div>
<div class="ab" style="left:565px;top:763px;width:1px;height:31px;background:#C0C4CC"></div>
<div class="ab" style="left:708px;top:763px;width:1px;height:31px;background:#C0C4CC"></div>
<div class="ab" style="left:19px;top:765px;width:315px;height:30px;background:#E6EAFC;border-top:1px solid #fff;border-left:1px solid #fff;border-bottom:1px solid #696969;border-right:1px solid #696969;box-shadow:inset 1px 1px 0 #E0E0E0,inset -1px -1px 0 #A0A0A0"></div>
<div class="ab" style="left:709px;top:765px;width:232px;height:30px;background:#E6EAFC;border-top:1px solid #fff;border-left:1px solid #fff;border-bottom:1px solid #696969;border-right:1px solid #696969;box-shadow:inset 1px 1px 0 #E0E0E0,inset -1px -1px 0 #A0A0A0"></div>
<div class="ab" style="left:941px;top:765px;width:233px;height:30px;background:#E6EAFC;border-top:1px solid #fff;border-left:1px solid #fff;border-bottom:1px solid #696969;border-right:1px solid #696969;box-shadow:inset 1px 1px 0 #E0E0E0,inset -1px -1px 0 #A0A0A0"></div>
<div class="ab" style="left:1174px;top:765px;width:232px;height:30px;background:#E6EAFC;border-top:1px solid #fff;border-left:1px solid #fff;border-bottom:1px solid #696969;border-right:1px solid #696969;box-shadow:inset 1px 1px 0 #E0E0E0,inset -1px -1px 0 #A0A0A0"></div>
<div class="ab" style="left:1406px;top:765px;width:232px;height:30px;background:#E6EAFC;border-top:1px solid #fff;border-left:1px solid #fff;border-bottom:1px solid #696969;border-right:1px solid #696969;box-shadow:inset 1px 1px 0 #E0E0E0,inset -1px -1px 0 #A0A0A0"></div>
<div class="ab" style="left:1638px;top:765px;width:232px;height:30px;background:#E6EAFC;border-top:1px solid #fff;border-left:1px solid #fff;border-bottom:1px solid #696969;border-right:1px solid #696969;box-shadow:inset 1px 1px 0 #E0E0E0,inset -1px -1px 0 #A0A0A0"></div>
<div class="ab" style="left:334px;top:794px;width:375px;height:30px;background:#fff;border-bottom:1px solid #C0C4CC"></div>
<div class="ab" style="left:334px;top:794px;width:1px;height:30px;background:#fff"></div>
<div class="ab" style="left:565px;top:794px;width:1px;height:30px;background:#C0C4CC"></div>
<div class="ab" style="left:708px;top:794px;width:1px;height:30px;background:#C0C4CC"></div>
<div class="ab" style="left:19px;top:795px;width:315px;height:30px;background:#fff;border-top:1px solid #fff;border-left:1px solid #fff;border-bottom:1px solid #696969;border-right:1px solid #696969;box-shadow:inset 1px 1px 0 #E0E0E0,inset -1px -1px 0 #A0A0A0"></div>
<div class="ab" style="left:709px;top:795px;width:232px;height:30px;background:#fff;border-top:1px solid #fff;border-left:1px solid #fff;border-bottom:1px solid #696969;border-right:1px solid #696969;box-shadow:inset 1px 1px 0 #E0E0E0,inset -1px -1px 0 #A0A0A0"></div>
<div class="ab" style="left:941px;top:795px;width:233px;height:30px;background:#fff;border-top:1px solid #fff;border-left:1px solid #fff;border-bottom:1px solid #696969;border-right:1px solid #696969;box-shadow:inset 1px 1px 0 #E0E0E0,inset -1px -1px 0 #A0A0A0"></div>
<div class="ab" style="left:1174px;top:795px;width:232px;height:30px;background:#fff;border-top:1px solid #fff;border-left:1px solid #fff;border-bottom:1px solid #696969;border-right:1px solid #696969;box-shadow:inset 1px 1px 0 #E0E0E0,inset -1px -1px 0 #A0A0A0"></div>
<div class="ab" style="left:1406px;top:795px;width:232px;height:30px;background:#fff;border-top:1px solid #fff;border-left:1px solid #fff;border-bottom:1px solid #696969;border-right:1px solid #696969;box-shadow:inset 1px 1px 0 #E0E0E0,inset -1px -1px 0 #A0A0A0"></div>
<div class="ab" style="left:1638px;top:795px;width:232px;height:30px;background:#fff;border-top:1px solid #fff;border-left:1px solid #fff;border-bottom:1px solid #696969;border-right:1px solid #696969;box-shadow:inset 1px 1px 0 #E0E0E0,inset -1px -1px 0 #A0A0A0"></div>
<div class="ab" style="left:334px;top:824px;width:375px;height:31px;background:#E6EAFC;border-bottom:1px solid #C0C4CC"></div>
<div class="ab" style="left:334px;top:824px;width:1px;height:31px;background:#fff"></div>
<div class="ab" style="left:565px;top:824px;width:1px;height:31px;background:#C0C4CC"></div>
<div class="ab" style="left:708px;top:824px;width:1px;height:31px;background:#C0C4CC"></div>
<div class="ab" style="left:19px;top:825px;width:315px;height:31px;background:#E6EAFC;border-top:1px solid #fff;border-left:1px solid #fff;border-bottom:1px solid #696969;border-right:1px solid #696969;box-shadow:inset 1px 1px 0 #E0E0E0,inset -1px -1px 0 #A0A0A0"></div>
<div class="ab" style="left:709px;top:825px;width:232px;height:31px;background:#E6EAFC;border-top:1px solid #fff;border-left:1px solid #fff;border-bottom:1px solid #696969;border-right:1px solid #696969;box-shadow:inset 1px 1px 0 #E0E0E0,inset -1px -1px 0 #A0A0A0"></div>
<div class="ab" style="left:941px;top:825px;width:233px;height:31px;background:#E6EAFC;border-top:1px solid #fff;border-left:1px solid #fff;border-bottom:1px solid #696969;border-right:1px solid #696969;box-shadow:inset 1px 1px 0 #E0E0E0,inset -1px -1px 0 #A0A0A0"></div>
<div class="ab" style="left:1174px;top:825px;width:232px;height:31px;background:#E6EAFC;border-top:1px solid #fff;border-left:1px solid #fff;border-bottom:1px solid #696969;border-right:1px solid #696969;box-shadow:inset 1px 1px 0 #E0E0E0,inset -1px -1px 0 #A0A0A0"></div>
<div class="ab" style="left:1406px;top:825px;width:232px;height:31px;background:#E6EAFC;border-top:1px solid #fff;border-left:1px solid #fff;border-bottom:1px solid #696969;border-right:1px solid #696969;box-shadow:inset 1px 1px 0 #E0E0E0,inset -1px -1px 0 #A0A0A0"></div>
<div class="ab" style="left:1638px;top:825px;width:232px;height:31px;background:#E6EAFC;border-top:1px solid #fff;border-left:1px solid #fff;border-bottom:1px solid #696969;border-right:1px solid #696969;box-shadow:inset 1px 1px 0 #E0E0E0,inset -1px -1px 0 #A0A0A0"></div>
<div class="ab" style="left:334px;top:855px;width:375px;height:30px;background:#fff;border-bottom:1px solid #C0C4CC"></div>
<div class="ab" style="left:334px;top:855px;width:1px;height:30px;background:#fff"></div>
<div class="ab" style="left:565px;top:855px;width:1px;height:30px;background:#C0C4CC"></div>
<div class="ab" style="left:708px;top:855px;width:1px;height:30px;background:#C0C4CC"></div>
<div class="ab" style="left:19px;top:856px;width:315px;height:30px;background:#fff;border-top:1px solid #fff;border-left:1px solid #fff;border-bottom:1px solid #696969;border-right:1px solid #696969;box-shadow:inset 1px 1px 0 #E0E0E0,inset -1px -1px 0 #A0A0A0"></div>
<div class="ab" style="left:709px;top:856px;width:232px;height:30px;background:#fff;border-top:1px solid #fff;border-left:1px solid #fff;border-bottom:1px solid #696969;border-right:1px solid #696969;box-shadow:inset 1px 1px 0 #E0E0E0,inset -1px -1px 0 #A0A0A0"></div>
<div class="ab" style="left:941px;top:856px;width:233px;height:30px;background:#fff;border-top:1px solid #fff;border-left:1px solid #fff;border-bottom:1px solid #696969;border-right:1px solid #696969;box-shadow:inset 1px 1px 0 #E0E0E0,inset -1px -1px 0 #A0A0A0"></div>
<div class="ab" style="left:1174px;top:856px;width:232px;height:30px;background:#fff;border-top:1px solid #fff;border-left:1px solid #fff;border-bottom:1px solid #696969;border-right:1px solid #696969;box-shadow:inset 1px 1px 0 #E0E0E0,inset -1px -1px 0 #A0A0A0"></div>
<div class="ab" style="left:1406px;top:856px;width:232px;height:30px;background:#fff;border-top:1px solid #fff;border-left:1px solid #fff;border-bottom:1px solid #696969;border-right:1px solid #696969;box-shadow:inset 1px 1px 0 #E0E0E0,inset -1px -1px 0 #A0A0A0"></div>
<div class="ab" style="left:1638px;top:856px;width:232px;height:30px;background:#fff;border-top:1px solid #fff;border-left:1px solid #fff;border-bottom:1px solid #696969;border-right:1px solid #696969;box-shadow:inset 1px 1px 0 #E0E0E0,inset -1px -1px 0 #A0A0A0"></div>
<div class="ab" style="left:334px;top:885px;width:375px;height:30px;background:#E6EAFC;border-bottom:1px solid #C0C4CC"></div>
<div class="ab" style="left:334px;top:885px;width:1px;height:30px;background:#fff"></div>
<div class="ab" style="left:565px;top:885px;width:1px;height:30px;background:#C0C4CC"></div>
<div class="ab" style="left:708px;top:885px;width:1px;height:30px;background:#C0C4CC"></div>
<div class="ab" style="left:19px;top:886px;width:315px;height:31px;background:#E6EAFC;border-top:1px solid #fff;border-left:1px solid #fff;border-bottom:1px solid #696969;border-right:1px solid #696969;box-shadow:inset 1px 1px 0 #E0E0E0,inset -1px -1px 0 #A0A0A0"></div>
<div class="ab" style="left:709px;top:886px;width:232px;height:31px;background:#E6EAFC;border-top:1px solid #fff;border-left:1px solid #fff;border-bottom:1px solid #696969;border-right:1px solid #696969;box-shadow:inset 1px 1px 0 #E0E0E0,inset -1px -1px 0 #A0A0A0"></div>
<div class="ab" style="left:941px;top:886px;width:233px;height:31px;background:#E6EAFC;border-top:1px solid #fff;border-left:1px solid #fff;border-bottom:1px solid #696969;border-right:1px solid #696969;box-shadow:inset 1px 1px 0 #E0E0E0,inset -1px -1px 0 #A0A0A0"></div>
<div class="ab" style="left:1174px;top:886px;width:232px;height:31px;background:#E6EAFC;border-top:1px solid #fff;border-left:1px solid #fff;border-bottom:1px solid #696969;border-right:1px solid #696969;box-shadow:inset 1px 1px 0 #E0E0E0,inset -1px -1px 0 #A0A0A0"></div>
<div class="ab" style="left:1406px;top:886px;width:232px;height:31px;background:#E6EAFC;border-top:1px solid #fff;border-left:1px solid #fff;border-bottom:1px solid #696969;border-right:1px solid #696969;box-shadow:inset 1px 1px 0 #E0E0E0,inset -1px -1px 0 #A0A0A0"></div>
<div class="ab" style="left:1638px;top:886px;width:232px;height:31px;background:#E6EAFC;border-top:1px solid #fff;border-left:1px solid #fff;border-bottom:1px solid #696969;border-right:1px solid #696969;box-shadow:inset 1px 1px 0 #E0E0E0,inset -1px -1px 0 #A0A0A0"></div>
<div class="ab" style="left:334px;top:915px;width:375px;height:31px;background:#fff;border-bottom:1px solid #C0C4CC"></div>
<div class="ab" style="left:334px;top:915px;width:1px;height:31px;background:#fff"></div>
<div class="ab" style="left:565px;top:915px;width:1px;height:31px;background:#C0C4CC"></div>
<div class="ab" style="left:708px;top:915px;width:1px;height:31px;background:#C0C4CC"></div>
<div class="ab" style="left:19px;top:917px;width:315px;height:30px;background:#fff;border-top:1px solid #fff;border-left:1px solid #fff;border-bottom:1px solid #696969;border-right:1px solid #696969;box-shadow:inset 1px 1px 0 #E0E0E0,inset -1px -1px 0 #A0A0A0"></div>
<div class="ab" style="left:709px;top:917px;width:232px;height:30px;background:#fff;border-top:1px solid #fff;border-left:1px solid #fff;border-bottom:1px solid #696969;border-right:1px solid #696969;box-shadow:inset 1px 1px 0 #E0E0E0,inset -1px -1px 0 #A0A0A0"></div>
<div class="ab" style="left:941px;top:917px;width:233px;height:30px;background:#fff;border-top:1px solid #fff;border-left:1px solid #fff;border-bottom:1px solid #696969;border-right:1px solid #696969;box-shadow:inset 1px 1px 0 #E0E0E0,inset -1px -1px 0 #A0A0A0"></div>
<div class="ab" style="left:1174px;top:917px;width:232px;height:30px;background:#fff;border-top:1px solid #fff;border-left:1px solid #fff;border-bottom:1px solid #696969;border-right:1px solid #696969;box-shadow:inset 1px 1px 0 #E0E0E0,inset -1px -1px 0 #A0A0A0"></div>
<div class="ab" style="left:1406px;top:917px;width:232px;height:30px;background:#fff;border-top:1px solid #fff;border-left:1px solid #fff;border-bottom:1px solid #696969;border-right:1px solid #696969;box-shadow:inset 1px 1px 0 #E0E0E0,inset -1px -1px 0 #A0A0A0"></div>
<div class="ab" style="left:1638px;top:917px;width:232px;height:30px;background:#fff;border-top:1px solid #fff;border-left:1px solid #fff;border-bottom:1px solid #696969;border-right:1px solid #696969;box-shadow:inset 1px 1px 0 #E0E0E0,inset -1px -1px 0 #A0A0A0"></div>
<div class="ab" style="left:1876px;top:278px;width:30px;height:672px;background:repeating-conic-gradient(#C0C0C0 0 25%,#FFFFFF 0 50%) 0 0/2px 2px"></div>
<div class="ab" style="left:1876px;top:278px;width:30px;height:29px;background:#F0F0F0;border-top:1px solid #fff;border-left:1px solid #fff;border-bottom:2px solid #808080;border-right:2px solid #808080"></div>
<svg class="ab" style="left:1883px;top:288px" width="16" height="9"><path d="M0 8 H15 L7.5 0 Z" fill="#606060"/></svg>
<div class="ab" style="left:1876px;top:921px;width:30px;height:29px;background:#F0F0F0;border-top:1px solid #fff;border-left:1px solid #fff;border-bottom:2px solid #808080;border-right:2px solid #808080"></div>
<svg class="ab" style="left:1883px;top:931px" width="16" height="9"><path d="M0 0 H15 L7.5 8 Z" fill="#606060"/></svg>
<div class="ab" style="left:709px;top:950px;width:1161px;height:31px;background:#fff"></div>
<div class="ab" style="left:941px;top:950px;width:1px;height:31px;background:#C0C0C0"></div>
<div class="ab" style="left:1173px;top:950px;width:1px;height:31px;background:#C0C0C0"></div>
<div class="ab" style="left:1405px;top:950px;width:1px;height:31px;background:#C0C0C0"></div>
<div class="ab" style="left:1637px;top:950px;width:1px;height:31px;background:#C0C0C0"></div>
<div class="num" style="left:736px;top:957px;width:200px;-webkit-text-stroke:0">23,446,691</div>
<div class="num" style="left:969px;top:957px;width:200px;-webkit-text-stroke:0">316,530,477</div>
<div class="num" style="left:1202px;top:957px;width:200px;-webkit-text-stroke:0">293,083,786</div>
<div class="ab" style="left:711px;top:984px;width:1159px;height:26px;background:repeating-conic-gradient(#C0C0C0 0 25%,#FFFFFF 0 50%) 0 0/2px 2px"></div>
<div class="ab" style="left:711px;top:984px;width:25px;height:26px;background:#F0F0F0;border-top:1px solid #fff;border-left:1px solid #fff;border-bottom:2px solid #808080;border-right:2px solid #808080"></div>
<svg class="ab" style="left:719px;top:988px" width="9" height="16"><path d="M8 0 V15 L0 7.5 Z" fill="#606060"/></svg>
<div class="ab" style="left:736px;top:984px;width:461px;height:26px;background:#F0F0F0;border-top:1px solid #fff;border-left:1px solid #fff;border-bottom:2px solid #808080;border-right:2px solid #808080"></div>
<div class="ab" style="left:1845px;top:984px;width:25px;height:26px;background:#F0F0F0;border-top:1px solid #fff;border-left:1px solid #fff;border-bottom:2px solid #808080;border-right:2px solid #808080"></div>
<svg class="ab" style="left:1852px;top:988px" width="9" height="16"><path d="M0 0 V15 L8 7.5 Z" fill="#606060"/></svg>
<div class="ab" style="left:1px;top:1022px;width:1919px;height:1px;background:#8A9AAE"></div>
<div class="ab" style="left:1px;top:1023px;width:1919px;height:1px;background:#fff"></div>
<div class="ab" style="left:0;top:1125px;width:1920px;height:1px;background:#8A9AAE"></div>
<div class="ab" style="left:0;top:1126px;width:1920px;height:1px;background:#fff"></div>
<div class="t" style="left:62px;top:1024px;font-size:17px"><span style="letter-spacing:-3px">F</span>1</div>
<div class="t" style="left:710px;top:1024px;font-size:17px">F5</div>
<div class="t" style="left:857px;top:1024px;font-size:17px">F6</div>
<div class="t" style="left:1006px;top:1024px;font-size:17px">F7</div>
<div class="t" style="left:1823px;top:1024px;font-size:17px">F12</div>
<div class="t" style="left:20px;top:1089px;width:100px;text-align:center;font-size:12px;font-weight:bold;color:#000;-webkit-text-stroke:0.4px #000;transform:scaleX(1)">ヘルプ</div>
<div class="t" style="left:672px;top:1089px;width:100px;text-align:center;font-size:12px;font-weight:bold;color:#000;-webkit-text-stroke:0.4px #000;transform:scaleX(1)">明細へ</div>
<div class="t" style="left:820px;top:1089px;width:100px;text-align:center;font-size:12px;font-weight:bold;color:#8c8c8c;-webkit-text-stroke:0.4px #8c8c8c;transform:scaleX(1)">元帳へ</div>
<div class="t" style="left:968px;top:1088px;width:100px;text-align:center;font-size:12px;font-weight:bold;color:#000;-webkit-text-stroke:0.4px #000;transform:scaleX(0.84)">リセット</div>
<div class="t" style="left:1789px;top:1089px;width:100px;text-align:center;font-size:12px;font-weight:bold;color:#000;-webkit-text-stroke:0.4px #000;transform:scaleX(1)">終了</div>
<svg class="ab" style="left:50px;top:1052px" width="36" height="34" viewBox="0 0 36 34">
<path d="M5 17.5 L16.4 5.4 L30.6 15.2 L21 24 L21.8 29 L5.2 20 Z" fill="#4a64f2" stroke="#000" stroke-width="1.4" stroke-linejoin="round"/>
<path d="M6.5 19.6 L21 27.2" stroke="#2038f0" stroke-width="1.4"/>
<path d="M21 24 L30.6 15.2 L31.3 20.3 L21.8 29 Z" fill="#fff" stroke="#000" stroke-width="1.4" stroke-linejoin="round"/>
<path d="M13.6 15.8 Q12.8 10.6 16.6 10.4 Q20 10.4 19.6 15.6" stroke="#fff" stroke-width="1.7" fill="none"/>
<circle cx="22" cy="18.3" r="1.1" fill="#fff"/>
</svg>
<svg class="ab" style="left:704px;top:1050px" width="40" height="36" viewBox="0 0 40 36">
<rect x="6.5" y="5.5" width="26" height="6" fill="#fff" stroke="#000" stroke-width="1.3"/>
<rect x="11" y="7.5" width="5.5" height="1.2" fill="#888"/><rect x="19" y="7.5" width="5" height="1.2" fill="#888"/>
<rect x="6.5" y="17.5" width="26" height="13" fill="#fff" stroke="#000" stroke-width="1.3"/>
<rect x="7.2" y="18.2" width="12.5" height="3" fill="#c8dcf8"/><rect x="19.7" y="18.2" width="12.1" height="3" fill="#e070a8"/>
<rect x="7.2" y="26.5" width="12.5" height="3.3" fill="#c8dcf8"/><rect x="19.7" y="26.5" width="12.1" height="3.3" fill="#e070a8"/>
<rect x="7" y="21.2" width="25" height="0.8" fill="#aaa"/><rect x="7" y="25.8" width="25" height="0.8" fill="#aaa"/><rect x="19.2" y="21.5" width="0.8" height="5" fill="#aaa"/>
<path d="M10.5 10 Q7.5 17 12.5 24.5" stroke="#f00" stroke-width="2.2" fill="none"/>
<path d="M9 26 L14.5 26 L14.5 22" stroke="#f00" stroke-width="2" fill="none"/>
<path d="M27 24 Q30.5 18 27.5 10" stroke="#00f" stroke-width="2.2" fill="none"/>
<path d="M23.5 9 L26 7.5 L29.5 9" stroke="#00f" stroke-width="2" fill="none"/>
</svg>
<svg class="ab" style="left:850px;top:1048px" width="44" height="44" viewBox="0 0 44 44">
<path d="M7 15 L21 18 L21 39 L7 37 Z" fill="#9a9a9a" stroke="#8a8a8a" stroke-width="1"/>
<rect x="10" y="19" width="7.5" height="7" fill="#a4a4a4" stroke="#8c8c8c" stroke-width="0.8"/>
<rect x="10" y="28" width="7.5" height="7" fill="#a4a4a4" stroke="#8c8c8c" stroke-width="0.8"/>
<rect x="18.5" y="6.5" width="15.5" height="11" fill="#a8a8a8" stroke="#8a8a8a" stroke-width="1.2"/>
<rect x="34" y="7" width="2.5" height="12" fill="#9a9a9a"/><rect x="19" y="17.5" width="17" height="2.2" fill="#9a9a9a"/>
<path d="M20 9.5 H33 M20 12 H33 M20 14.5 H33" stroke="#959595" stroke-width="0.8"/>
<path d="M21 27 L28 19" stroke="#999" stroke-width="2.2"/>
</svg>
<svg class="ab" style="left:998px;top:1050px" width="36" height="38" viewBox="0 0 36 38">
<path d="M14 9 L15 6.3 H22 L23 9 Z" fill="#444" stroke="#222" stroke-width="0.8"/>
<path d="M6.5 10 Q6 8.6 8 8.4 H28 Q30 8.6 29.6 10.2 L29 11.8 H7 Z" fill="#555" stroke="#111" stroke-width="1"/>
<path d="M7.5 12 L9.5 35.2 H26.5 L28.5 12 Z" fill="#fff" stroke="#111" stroke-width="1.2"/>
<path d="M11.8 14 L12.2 33" stroke="#8a8a8a" stroke-width="1.3"/>
<path d="M15.5 14 L15.6 33" stroke="#a0a0a0" stroke-width="1.6"/>
<path d="M20.5 14 L20.3 33" stroke="#222" stroke-width="1.6"/>
<path d="M25 14 L24.6 33" stroke="#000" stroke-width="1.6"/>
</svg>
<svg class="ab" style="left:1822px;top:1050px" width="36" height="40" viewBox="0 0 36 40">
<path d="M7 5 L26.5 8 L26.5 37 L7 33.5 Z" fill="#b06c0c" stroke="#3a2000" stroke-width="1"/>
<path d="M25 8 L27 8.3 L27 37 L25 36.8 Z" fill="#2a1400"/>
<path d="M10 8.5 L23 10.5 L23 20.5 L10 19 Z" fill="#b87410" stroke="#3a2000" stroke-width="1.2"/>
<path d="M10 21.5 L23 23 L23 33.5 L10 31.5 Z" fill="#b87410" stroke="#3a2000" stroke-width="1.2"/>
<circle cx="23.5" cy="23.5" r="1.4" fill="#ffff00"/>
</svg>
</body></html>
